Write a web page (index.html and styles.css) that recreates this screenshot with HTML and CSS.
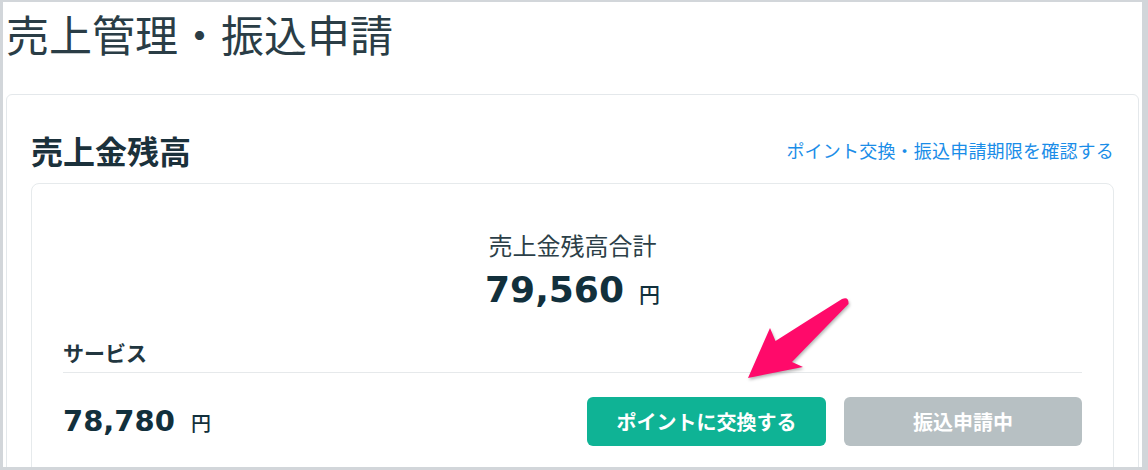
FILE: index.html
```html
<!DOCTYPE html>
<html lang="ja">
<head>
<meta charset="utf-8">
<title>売上管理・振込申請</title>
<link rel="stylesheet" href="styles.css">
</head>
<body>
<div class="frame">
  <h1 class="page-title">売上管理・振込申請</h1>
  <section class="card">
    <div class="card-head">
      <h2 class="card-title">売上金残高</h2>
      <a class="deadline-link" href="#">ポイント交換・振込申請期限を確認する</a>
    </div>
    <div class="inner-card">
      <div class="total-label">売上金残高合計</div>
      <div class="total-amount"><span class="num-lg">79,560</span><span class="yen-lg">円</span></div>
      <div class="service-label">サービス</div>
      <div class="service-row">
        <div class="service-amount"><span class="num-md">78,780</span><span class="yen-md">円</span></div>
        <div class="actions">
          <button class="btn btn-green" type="button">ポイントに交換する</button>
          <button class="btn btn-gray" type="button">振込申請中</button>
        </div>
      </div>
    </div>
  </section>
  <svg class="arrow" width="120" height="100" viewBox="0 0 120 100" aria-hidden="true">
    <path d="M8 88 L30 38 L35.5 51 Q70 29 102 9 Q109 6 108.5 14 Q82 41 52 72 L63 77 Z" fill="#ff0a6a"/>
  </svg>
</div>
</body>
</html>
```

FILE: styles.css
```css
* {
  box-sizing: border-box;
}

html, body {
  margin: 0;
  padding: 0;
  background: #ffffff;
}

body {
  font-family: "Noto Sans CJK JP", "Noto Sans", sans-serif;
  color: #1c3440;
}

.frame {
  position: relative;
  width: 1148px;
  height: 470px;
  overflow: hidden;
  border-style: solid;
  border-color: #d2d6da;
  border-width: 2px 6px 3px 3px;
  background: #ffffff;
}

.page-title {
  margin: 0;
  padding: 10px 0 0 3px;
  font-size: 43px;
  line-height: 43px;
  font-weight: 400;
  color: #2a3d46;
}

.card {
  margin: 39px 3px 0 3px;
  border: 1px solid #e4e8eb;
  border-radius: 6px;
  padding: 39px 24px 0 24px;
  height: 400px;
}

.card-head {
  display: flex;
  justify-content: space-between;
  align-items: center;
  height: 32px;
}

.card-title {
  margin: 0;
  font-size: 32px;
  line-height: 32px;
  font-weight: 700;
  color: #1b313b;
}

.deadline-link {
  font-size: 18px;
  line-height: 18px;
  letter-spacing: 0.2px;
  color: #1a8de8;
  text-decoration: none;
}

.inner-card {
  margin-top: 17px;
  border: 1px solid #e6eaec;
  border-radius: 8px;
  padding: 49px 31px 0 31px;
  height: 320px;
}

.total-label {
  text-align: center;
  font-size: 24px;
  line-height: 24px;
  color: #2c3f48;
}

.total-amount {
  margin-top: 15px;
  display: flex;
  justify-content: center;
  align-items: baseline;
  height: 36px;
}

.num-lg {
  font-family: "DejaVu Sans", sans-serif;
  font-weight: 700;
  font-size: 36px;
  line-height: 36px;
  color: #12303c;
}

.yen-lg {
  margin-left: 15px;
  font-size: 21px;
  line-height: 21px;
  font-weight: 500;
  color: #12303c;
}

.service-label {
  margin-top: 34px;
  padding-bottom: 9px;
  border-bottom: 1px solid #e6e9eb;
  font-size: 21px;
  line-height: 21px;
  font-weight: 700;
  color: #22363f;
}

.service-row {
  margin-top: 24px;
  display: flex;
  justify-content: space-between;
  align-items: center;
}

.service-amount {
  display: flex;
  align-items: baseline;
}

.num-md {
  font-family: "DejaVu Sans", sans-serif;
  font-weight: 700;
  font-size: 29px;
  line-height: 29px;
  color: #12303c;
}

.yen-md {
  margin-left: 16px;
  font-size: 20px;
  line-height: 20px;
  font-weight: 500;
  color: #12303c;
}

.actions {
  display: flex;
  gap: 18px;
}

.btn {
  height: 49px;
  border: none;
  border-radius: 6px;
  font-family: "Noto Sans CJK JP", "Noto Sans", sans-serif;
  font-size: 20px;
  font-weight: 700;
  color: #ffffff;
  padding: 0;
}

.btn-green {
  width: 239px;
  background: #0fb395;
}

.btn-gray {
  width: 238px;
  background: #b7c0c3;
}

.arrow {
  position: absolute;
  left: 737px;
  top: 288px;
  filter: drop-shadow(1px 2px 1.5px rgba(0, 0, 0, 0.28));
}
```
